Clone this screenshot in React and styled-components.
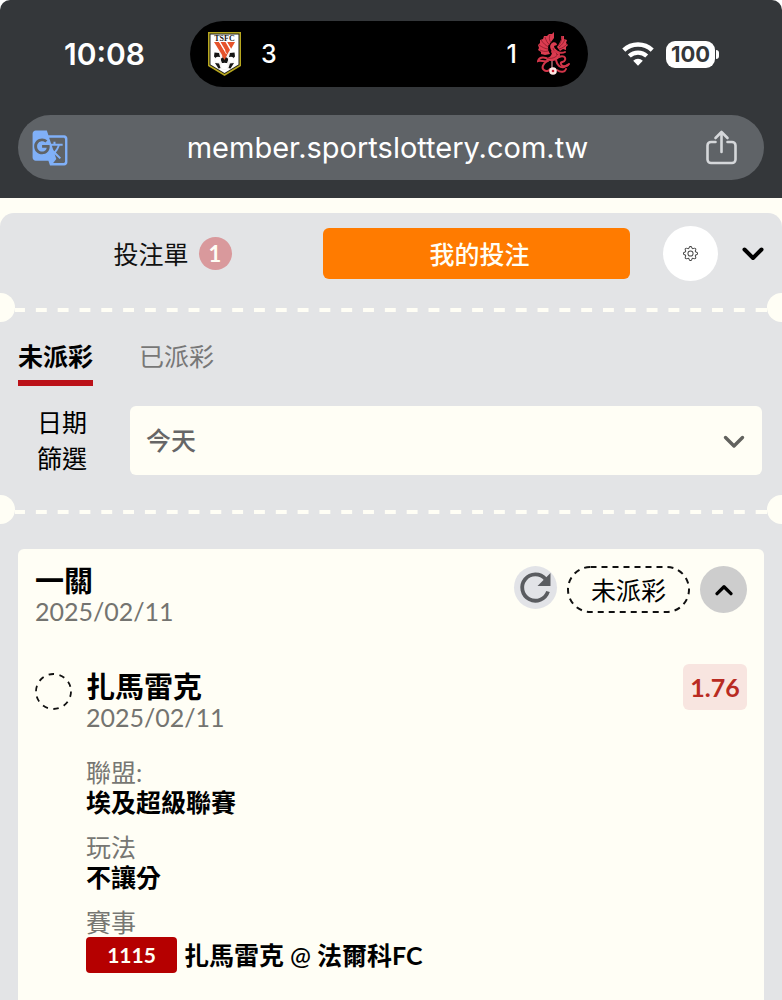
import React, { useState } from 'react';
import styled, { createGlobalStyle } from 'styled-components';
import { MdGTranslate } from 'react-icons/md';
import { BsGear } from 'react-icons/bs';

const cream = '#fffef5';
const panel = '#e3e4e6';

const GlobalStyle = createGlobalStyle`
  *, *::before, *::after {
    box-sizing: border-box;
  }

  body {
    margin: 0;
    background: ${cream};
    color: #000;
    font-family: Lato, 'Noto Sans CJK TC', sans-serif;
    font-size: 25px;
    line-height: 30px;
  }

  button, select {
    margin: 0;
    padding: 0;
    border: 0;
    background: none;
    color: inherit;
    font: inherit;
    cursor: pointer;
  }

  h2, h3, p, dl, dd {
    margin: 0;
    font-size: inherit;
  }

  svg {
    display: block;
  }
`;

const PageStyled = styled.div`
  display: flex;
  flex-direction: column;
  height: 100vh;
  overflow: hidden;
`;

const BrowserStyled = styled.div`
  background: #fff;
`;

const BrowserBarStyled = styled.header`
  display: flex;
  flex-direction: column;
  gap: 28px;
  padding: 21px 0 18px;
  border-radius: 10px 10px 0 0;
  background: #34373a;
  color: #fff;
  font-family: Inter, sans-serif;
`;

const StatusBarStyled = styled.div`
  display: grid;
  grid-template-columns: 190px 1fr 194px;
  align-items: center;
`;

const ClockStyled = styled.time`
  padding-left: 64px;
  font-size: 30px;
  font-weight: 600;
`;

const IslandStyled = styled.div`
  display: flex;
  align-items: center;
  justify-content: space-between;
  height: 66px;
  padding: 0 18px;
  border-radius: 33px;
  background: #000;
`;

const TeamStyled = styled.div`
  display: flex;
  align-items: center;
  gap: 20px;
  font-size: 25px;
  font-weight: 500;
`;

const SystemStyled = styled.div`
  display: flex;
  align-items: center;
  gap: 12px;
  padding-left: 34px;
`;

const BatteryStyled = styled.div`
  display: flex;
  align-items: center;

  &::after {
    content: '';
    width: 3px;
    height: 9px;
    margin-left: 1px;
    border-radius: 0 4px 4px 0;
    background: #fff;
  }
`;

const BatteryLevelStyled = styled.span`
  width: 49px;
  border-radius: 9px;
  background: #fff;
  color: #34373a;
  font-size: 22px;
  font-weight: 700;
  line-height: 27px;
  text-align: center;
`;

const AddressBarStyled = styled.div`
  display: flex;
  align-items: center;
  justify-content: space-between;
  height: 65px;
  margin: 0 18px;
  padding: 0 27px 0 13px;
  border-radius: 33px;
  background: #5f6367;
`;

const AddressStyled = styled.span`
  font-size: 29px;
`;

const BarIconStyled = styled.button`
  color: ${({ $color }) => $color};
`;

const SlipStyled = styled.main`
  flex: 1;
  margin-top: 15px;
  border-radius: 14px 14px 0 0;
  background: ${panel};
`;

const SlipBarStyled = styled.nav`
  display: flex;
  align-items: center;
  padding: 13px 18px 12px 16px;
`;

const SlipTabStyled = styled.button`
  display: flex;
  flex: 1;
  align-items: center;
  justify-content: center;
  gap: 10px;
  height: 51px;
  padding-left: 6px;
  border-radius: 6px;
  background: ${({ $active }) => ($active ? '#ff7b00' : 'transparent')};
  color: ${({ $active }) => ($active ? cream : '#111')};
  font-weight: ${({ $active }) => ($active ? 500 : 400)};
`;

const CountStyled = styled.span`
  width: 33px;
  border-radius: 50%;
  background: #d9999c;
  color: ${cream};
  font-size: 22px;
  font-weight: 700;
  line-height: 33px;
`;

const GearButtonStyled = styled.button`
  display: grid;
  place-items: center;
  width: 55px;
  height: 55px;
  margin: 0 24px 0 33px;
  border-radius: 50%;
  background: #fff;
  color: #444;
`;

const PerforationStyled = styled.div`
  display: flex;
  height: 29px;
`;

const NotchStyled = styled.span`
  width: 15px;
  border-radius: ${({ $side }) =>
    $side === 'left' ? '0 15px 15px 0' : '15px 0 0 15px'};
  background: ${cream};
`;

const DashesStyled = styled.span`
  flex: 1;
  height: 4px;
  margin-top: 15px;
  border: solid ${cream};
  border-width: 0 5px;
  background: linear-gradient(
      90deg,
      ${cream} 25%,
      transparent 25% 75%,
      ${cream} 75%
    )
    0 0 / 22px 4px round padding-box;
`;

const StateTabsStyled = styled.div`
  display: flex;
  gap: 46px;
  padding: 16px 18px 0;
`;

const StateTabStyled = styled.button`
  padding: 0 0 6px;
  border-bottom: 6px solid
    ${({ $active }) => ($active ? '#bb1119' : 'transparent')};
  color: ${({ $active }) => ($active ? '#000' : '#777')};
  font-weight: ${({ $active }) => ($active ? 700 : 400)};
  line-height: 36px;
`;

const FilterStyled = styled.div`
  display: flex;
  align-items: center;
  gap: 24px;
  padding: 18px 20px 19px 18px;
`;

const FilterLabelStyled = styled.label`
  width: 88px;
  padding: 0 19px;
  line-height: 36px;
`;

const SelectWrapStyled = styled.div`
  position: relative;
  flex: 1;

  svg {
    position: absolute;
    top: 29px;
    right: 17px;
    pointer-events: none;
  }
`;

const SelectStyled = styled.select`
  display: block;
  width: 100%;
  height: 69px;
  padding: 0 16px;
  border-radius: 6px;
  background: ${cream};
  color: #666;
  font-weight: 500;
  appearance: none;
`;

const TicketStyled = styled.section`
  min-height: 600px;
  margin: 25px 18px 0;
  padding: 17px;
  border-radius: 6px;
  background: ${cream};
`;

const TicketHeadStyled = styled.div`
  display: flex;
  align-items: flex-start;
  gap: 10px;
  margin-bottom: 38px;
`;

const HeadingStyled = styled.div`
  flex: 1;
`;

const TitleStyled = styled.h2`
  font-size: 29px;
  font-weight: 700;
`;

const DateStyled = styled.p`
  color: #747470;
`;

const RoundButtonStyled = styled.button`
  display: grid;
  place-items: center;
  width: ${({ $size }) => $size}px;
  height: ${({ $size }) => $size}px;
  border-radius: 50%;
  background: ${({ $bg }) => $bg};
`;

const StatusPillStyled = styled.span`
  position: relative;
  width: 123px;
  line-height: 48px;
  text-align: center;

  svg {
    position: absolute;
    inset: 0;
  }
`;

const LegStyled = styled.article`
  display: grid;
  grid-template-columns: 37px 1fr auto;
  column-gap: 14px;
  align-items: start;
`;

const LegMarkStyled = styled.span`
  padding-top: 9px;
`;

const LegTextStyled = styled.div`
  padding-top: 8px;
`;

const OddsStyled = styled.strong`
  width: 64px;
  border-radius: 6px;
  background: #f8e5e0;
  color: #b92b22;
  font-weight: 700;
  line-height: 46px;
  text-align: center;
`;

const DetailsStyled = styled.dl`
  display: grid;
  gap: 15px;
  margin-top: 25px;
`;

const TermStyled = styled.dt`
  color: #777773;
`;

const ValueStyled = styled.dd`
  display: flex;
  align-items: center;
  gap: 7px;
  font-weight: 700;
`;

const MatchCodeStyled = styled.span`
  width: 91px;
  border-radius: 4px;
  background: #b50000;
  color: ${cream};
  font-size: 21px;
  line-height: 36px;
  text-align: center;
`;

const VersusStyled = styled.span`
  font-weight: 500;
`;

const Chevron = ({ up, width, color, stroke }) => (
  <svg width={width} height="14" viewBox="0 0 22 14" fill="none">
    <path
      d={up ? 'M2.5 11.5 11 3l8.5 8.5' : 'M2.5 2.5 11 11l8.5-8.5'}
      stroke={color}
      strokeWidth={stroke}
      strokeLinecap="round"
      strokeLinejoin="round"
    />
  </svg>
);

const ShieldCrest = () => (
  <svg width="33" height="44" viewBox="0 0 33 44">
    <path d="M0 0h33v34L16.500 44 0 34z" fill="#b7a71f" />
    <path d="M1.500 1.500h30v31.500L16.500 42 1.500 33z" fill="#1d1d18" />
    <path d="M2.500 2.500h28v30L16.500 41 2.500 32.500z" fill="#fff" />
    <text
      x="16.500"
      y="8.500"
      fontSize="8"
      fontWeight="700"
      fontFamily="Liberation Serif, serif"
      textAnchor="middle"
      fill="#222"
    >
      TSFC
    </text>
    <circle cx="16.500" cy="28" r="10" fill="#f4f2f0" />
    <g fill="#151515">
      <path d="M6.500 20.500 11 21l1 4-4 1.500-2-2z" />
      <path d="M26.500 20.500 22 21l-1 4 4 1.500 2-2z" />
      <path d="m12.500 27 4-3 4 3-1.500 4h-5z" />
      <path d="m7 31 4 .5 1.500 4.500-2 .5zM26 31l-4 .5-1.500 4.500 2 .5z" />
    </g>
    <circle cx="10" cy="27.500" r="2.800" fill="#fff" />
    <circle cx="23" cy="27.500" r="2.800" fill="#fff" />
    <circle cx="16.500" cy="34" r="3.200" fill="#fff" />
    <g fill="#e5532b">
      <path d="M6 10h5l8 13-2.500 4z" />
      <path d="M12.500 10h5l4.500 8-2.500 4z" />
      <path d="M19 10h8l-4 7z" />
      <path d="m14 24 4-6 2 3-3.500 7z" />
    </g>
    <path d="m11.500 10 7 12m0-12 5 8" stroke="#fff" strokeWidth="0.800" />
  </svg>
);

const PhoenixCrest = () => (
  <svg width="33" height="44" viewBox="0 0 33 44" fill="none">
    <g fill="#db3c50">
      <path d="M17 0 15 2 12 2 10 4 7 4 6 7 3 8 3 11 1 13 2 16 1 18 4 20 4 22 8 23 13 22 11 18 11 14 14 10 17 6z" />
      <path d="M24 1 24 4 27 4 27 7 30 8 29 11 31 13 29 15 29 18 26 17 23 19 20 15 22 12 24 8z" />
      <path d="M14 12c2-3 6-2 6 1l-3 1c0 4 6 4 6 9 0 4-5 6-9 6-3 0-5-1-6-3 5 0 7-3 7-6-1-3-3-5-1-8z" />
    </g>
    <g stroke="#7c1525" strokeWidth="0.700">
      <path d="M12 17C8 17 5 15 2 13M12 15C9 14 6 11 4 8M13 13C10 11 9 8 8 5M14 11C12 8 12 5 13 3M11 19c-3 1-6 0-8-1" />
      <path d="M21 14c3-3 4-7 4-10M22 15c3-2 5-5 6-8M22 17c4-1 6-3 8-5" />
      <path d="M10 26c4 1 9 0 11-4M16 16c0 3 4 4 4 7" />
    </g>
    <g stroke="#d23549" strokeWidth="2" strokeLinecap="round">
      <path d="M15 20c5-2 8 3 13 0" />
      <path d="M9 26c-4-1-7 0-8 3 3-1 6 1 10 0" />
      <path d="M10 29c-4 3-6 7-3 9 2 2 5 1 6-1" />
      <path d="M22 25c4-2 7 0 6 3s-5 1-4 4 5 3 8 0" />
      <path d="M19 28c1 5 4 8 8 7l4-2" />
      <path d="M20 38c4 3 8 2 9-1" />
    </g>
    <path d="M15 29v7" stroke="#d98a92" strokeWidth="1.200" />
    <circle cx="16" cy="39" r="3.800" fill="#ffe9e5" />
    <circle cx="16" cy="39" r="1.300" fill="#c51f32" />
  </svg>
);

const WifiIcon = () => (
  <svg width="32" height="24" viewBox="0 0 32 24" fill="none">
    <path d="M1.800 8.200a20.500 20.500 0 0 1 28.400 0" stroke="#fff" strokeWidth="4.400" />
    <path d="M7.300 14.100a12.500 12.500 0 0 1 17.400 0" stroke="#fff" strokeWidth="4.200" />
    <path d="M11.200 18.700a7 7 0 0 1 9.600 0L16 23.700z" fill="#fff" />
  </svg>
);

const ShareIcon = () => (
  <svg
    width="31"
    height="36"
    viewBox="0 0 31 36"
    fill="none"
    stroke="currentColor"
    strokeWidth="2.600"
    strokeLinecap="round"
    strokeLinejoin="round"
  >
    <path d="M9.500 12H5a3.500 3.500 0 0 0-3.500 3.500v14A3.500 3.500 0 0 0 5 33h21a3.500 3.500 0 0 0 3.500-3.500v-14A3.500 3.500 0 0 0 26 12h-4.500" />
    <path d="M15.500 22V2M9.500 8l6-6 6 6" />
  </svg>
);

const RefreshIcon = () => (
  <svg width="43" height="43" viewBox="0 0 43 43" fill="none">
    <path
      d="M31.500 13A13.200 13.200 0 1 0 34 25.500"
      stroke="#5a5c60"
      strokeWidth="3.800"
    />
    <path d="M36.500 7V20H23.500z" fill="#5a5c60" />
  </svg>
);

const PillOutline = () => (
  <svg width="123" height="47" fill="none">
    <rect
      x="1"
      y="1"
      width="121"
      height="45"
      rx="22.500"
      stroke="#111"
      strokeWidth="2"
      strokeDasharray="6 5"
    />
  </svg>
);

const DashedCircle = () => (
  <svg width="37" height="37" fill="none">
    <circle
      cx="18.500"
      cy="18.500"
      r="17.500"
      stroke="#111"
      strokeWidth="1.800"
      strokeDasharray="5.500 5.500"
    />
  </svg>
);

const Perforation = () => (
  <PerforationStyled>
    <NotchStyled $side="left" />
    <DashesStyled />
    <NotchStyled $side="right" />
  </PerforationStyled>
);

const Detail = ({ term, children }) => (
  <div>
    <TermStyled>{term}</TermStyled>
    <ValueStyled>{children}</ValueStyled>
  </div>
);

const BrowserChrome = () => (
  <BrowserStyled>
    <BrowserBarStyled>
      <StatusBarStyled>
        <ClockStyled>10:08</ClockStyled>
        <IslandStyled>
          <TeamStyled>
            <ShieldCrest />3
          </TeamStyled>
          <TeamStyled>
            1<PhoenixCrest />
          </TeamStyled>
        </IslandStyled>
        <SystemStyled>
          <WifiIcon />
          <BatteryStyled>
            <BatteryLevelStyled>100</BatteryLevelStyled>
          </BatteryStyled>
        </SystemStyled>
      </StatusBarStyled>
      <AddressBarStyled>
        <BarIconStyled $color="#80b0f8" aria-label="Translate">
          <MdGTranslate size={38} />
        </BarIconStyled>
        <AddressStyled>member.sportslottery.com.tw</AddressStyled>
        <BarIconStyled $color="#d5d7da" aria-label="Share">
          <ShareIcon />
        </BarIconStyled>
      </AddressBarStyled>
    </BrowserBarStyled>
  </BrowserStyled>
);

const App = () => {
  const [slipTab, setSlipTab] = useState('mine');
  const [stateTab, setStateTab] = useState('open');
  const [expanded, setExpanded] = useState(true);

  return (
    <PageStyled>
      <GlobalStyle />
      <BrowserChrome />
      <SlipStyled>
        <SlipBarStyled>
          <SlipTabStyled
            $active={slipTab === 'slip'}
            onClick={() => setSlipTab('slip')}
          >
            投注單
            <CountStyled>1</CountStyled>
          </SlipTabStyled>
          <SlipTabStyled
            $active={slipTab === 'mine'}
            onClick={() => setSlipTab('mine')}
          >
            我的投注
          </SlipTabStyled>
          <GearButtonStyled aria-label="設定">
            <BsGear size={15} />
          </GearButtonStyled>
          <button type="button" aria-label="收合">
            <Chevron width={22} color="#000" stroke={4} />
          </button>
        </SlipBarStyled>
        <Perforation />
        <StateTabsStyled>
          <StateTabStyled
            $active={stateTab === 'open'}
            onClick={() => setStateTab('open')}
          >
            未派彩
          </StateTabStyled>
          <StateTabStyled
            $active={stateTab === 'settled'}
            onClick={() => setStateTab('settled')}
          >
            已派彩
          </StateTabStyled>
        </StateTabsStyled>
        <FilterStyled>
          <FilterLabelStyled htmlFor="date-filter">日期篩選</FilterLabelStyled>
          <SelectWrapStyled>
            <SelectStyled id="date-filter" defaultValue="today">
              <option value="today">今天</option>
            </SelectStyled>
            <Chevron width={22} color="#62625e" stroke={3.4} />
          </SelectWrapStyled>
        </FilterStyled>
        <Perforation />
        <TicketStyled>
          <TicketHeadStyled>
            <HeadingStyled>
              <TitleStyled>一關</TitleStyled>
              <DateStyled>2025/02/11</DateStyled>
            </HeadingStyled>
            <RoundButtonStyled $size={43} $bg="#e2e3e7" aria-label="重新整理">
              <RefreshIcon />
            </RoundButtonStyled>
            <StatusPillStyled>
              <PillOutline />
              未派彩
            </StatusPillStyled>
            <RoundButtonStyled
              $size={47}
              $bg="#cdcdcd"
              aria-label="展開"
              onClick={() => setExpanded(!expanded)}
            >
              <Chevron up={expanded} width={18} color="#000" stroke={4} />
            </RoundButtonStyled>
          </TicketHeadStyled>
          {expanded && (
            <LegStyled>
              <LegMarkStyled>
                <DashedCircle />
              </LegMarkStyled>
              <LegTextStyled>
                <TitleStyled as="h3">扎馬雷克</TitleStyled>
                <DateStyled>2025/02/11</DateStyled>
                <DetailsStyled>
                  <Detail term="聯盟:">埃及超級聯賽</Detail>
                  <Detail term="玩法">不讓分</Detail>
                  <Detail term="賽事">
                    <MatchCodeStyled>1115</MatchCodeStyled>
                    <span>
                      扎馬雷克 <VersusStyled>@</VersusStyled> 法爾科FC
                    </span>
                  </Detail>
                </DetailsStyled>
              </LegTextStyled>
              <OddsStyled>1.76</OddsStyled>
            </LegStyled>
          )}
        </TicketStyled>
      </SlipStyled>
    </PageStyled>
  );
};

export default App;
